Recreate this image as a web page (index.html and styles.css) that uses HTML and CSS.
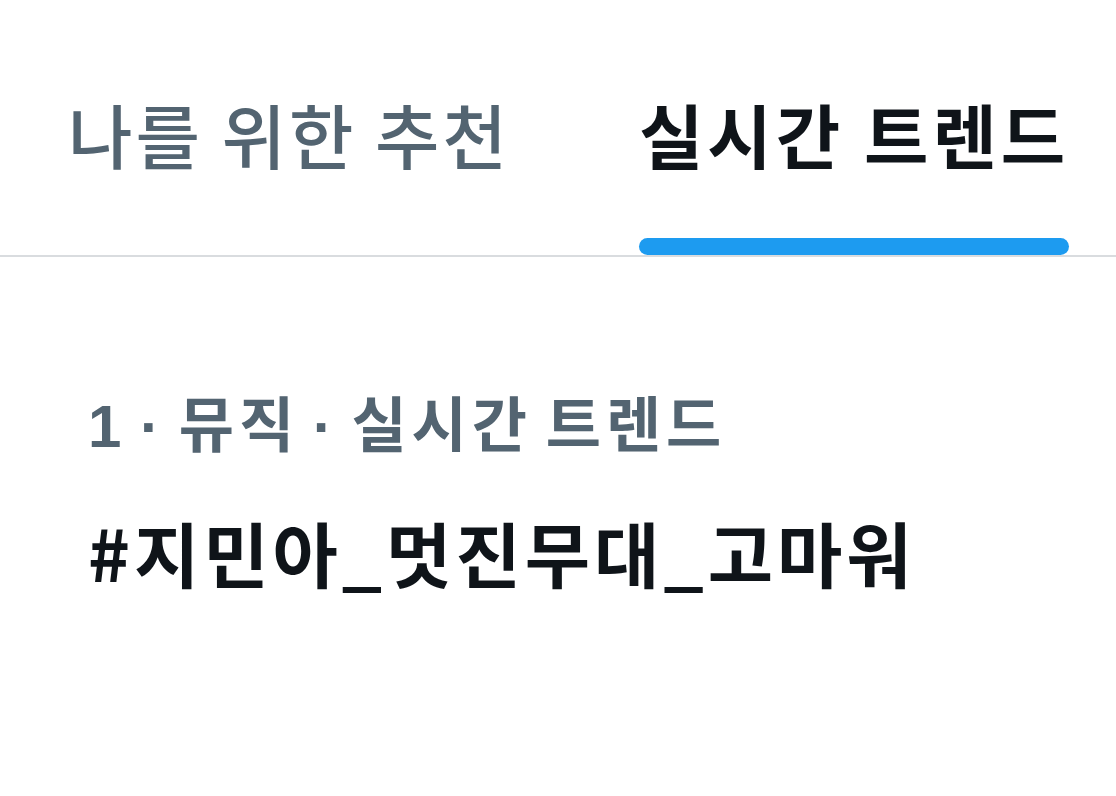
FILE: index.html
```html
<!DOCTYPE html>
<html>
<head>
    <title>실시간 트렌드</title>
    <link rel="stylesheet" href="styles.css">
</head>
<body>
    <div class="tabs">
        <div class="tab">나를 위한 추천</div>
        <div class="tab active">실시간 트렌드</div>
    </div>

    <div class="trend">
        <div class="trend-meta">1 · 뮤직 · 실시간 트렌드</div>
        <div class="trend-name">#지민아_멋진무대_고마워</div>
    </div>
</body>
</html>
```

FILE: styles.css
```css
body {
    margin: 0;
    padding: 0;
    background: #fff;
    font-family: "Noto Sans CJK KR", "Noto Sans", sans-serif;
    width: 1116px;
    height: 796px;
    overflow: hidden;
}
.tabs {
    display: flex;
    gap: 129px;
    padding: 0 0 0 68px;
    border-bottom: 2px solid #d9dcdf;
    height: 257px;
    box-sizing: border-box;
}
.tab {
    position: relative;
    font-size: 70px;
    font-weight: 500;
    letter-spacing: 3px;
    color: #536471;
    line-height: 1;
    padding-top: 99px;
}
.tab.active {
    color: #0f1419;
    font-weight: 700;
    letter-spacing: 4px;
}
.tab.active::after {
    content: "";
    position: absolute;
    left: 0;
    right: 0;
    top: 238px;
    height: 17px;
    border-radius: 9px;
    background: #1d9bf0;
}
.trend {
    padding: 140px 0 0 88px;
}
.trend-meta {
    font-family: "Liberation Sans", "Noto Sans CJK KR", sans-serif;
    font-size: 60px;
    font-weight: 700;
    letter-spacing: 5px;
    word-spacing: -8px;
    color: #536471;
    line-height: 1;
}
.trend-name {
    font-size: 71px;
    font-weight: 700;
    letter-spacing: 4px;
    color: #0f1419;
    line-height: 1;
    margin-top: 59px;
}
```
